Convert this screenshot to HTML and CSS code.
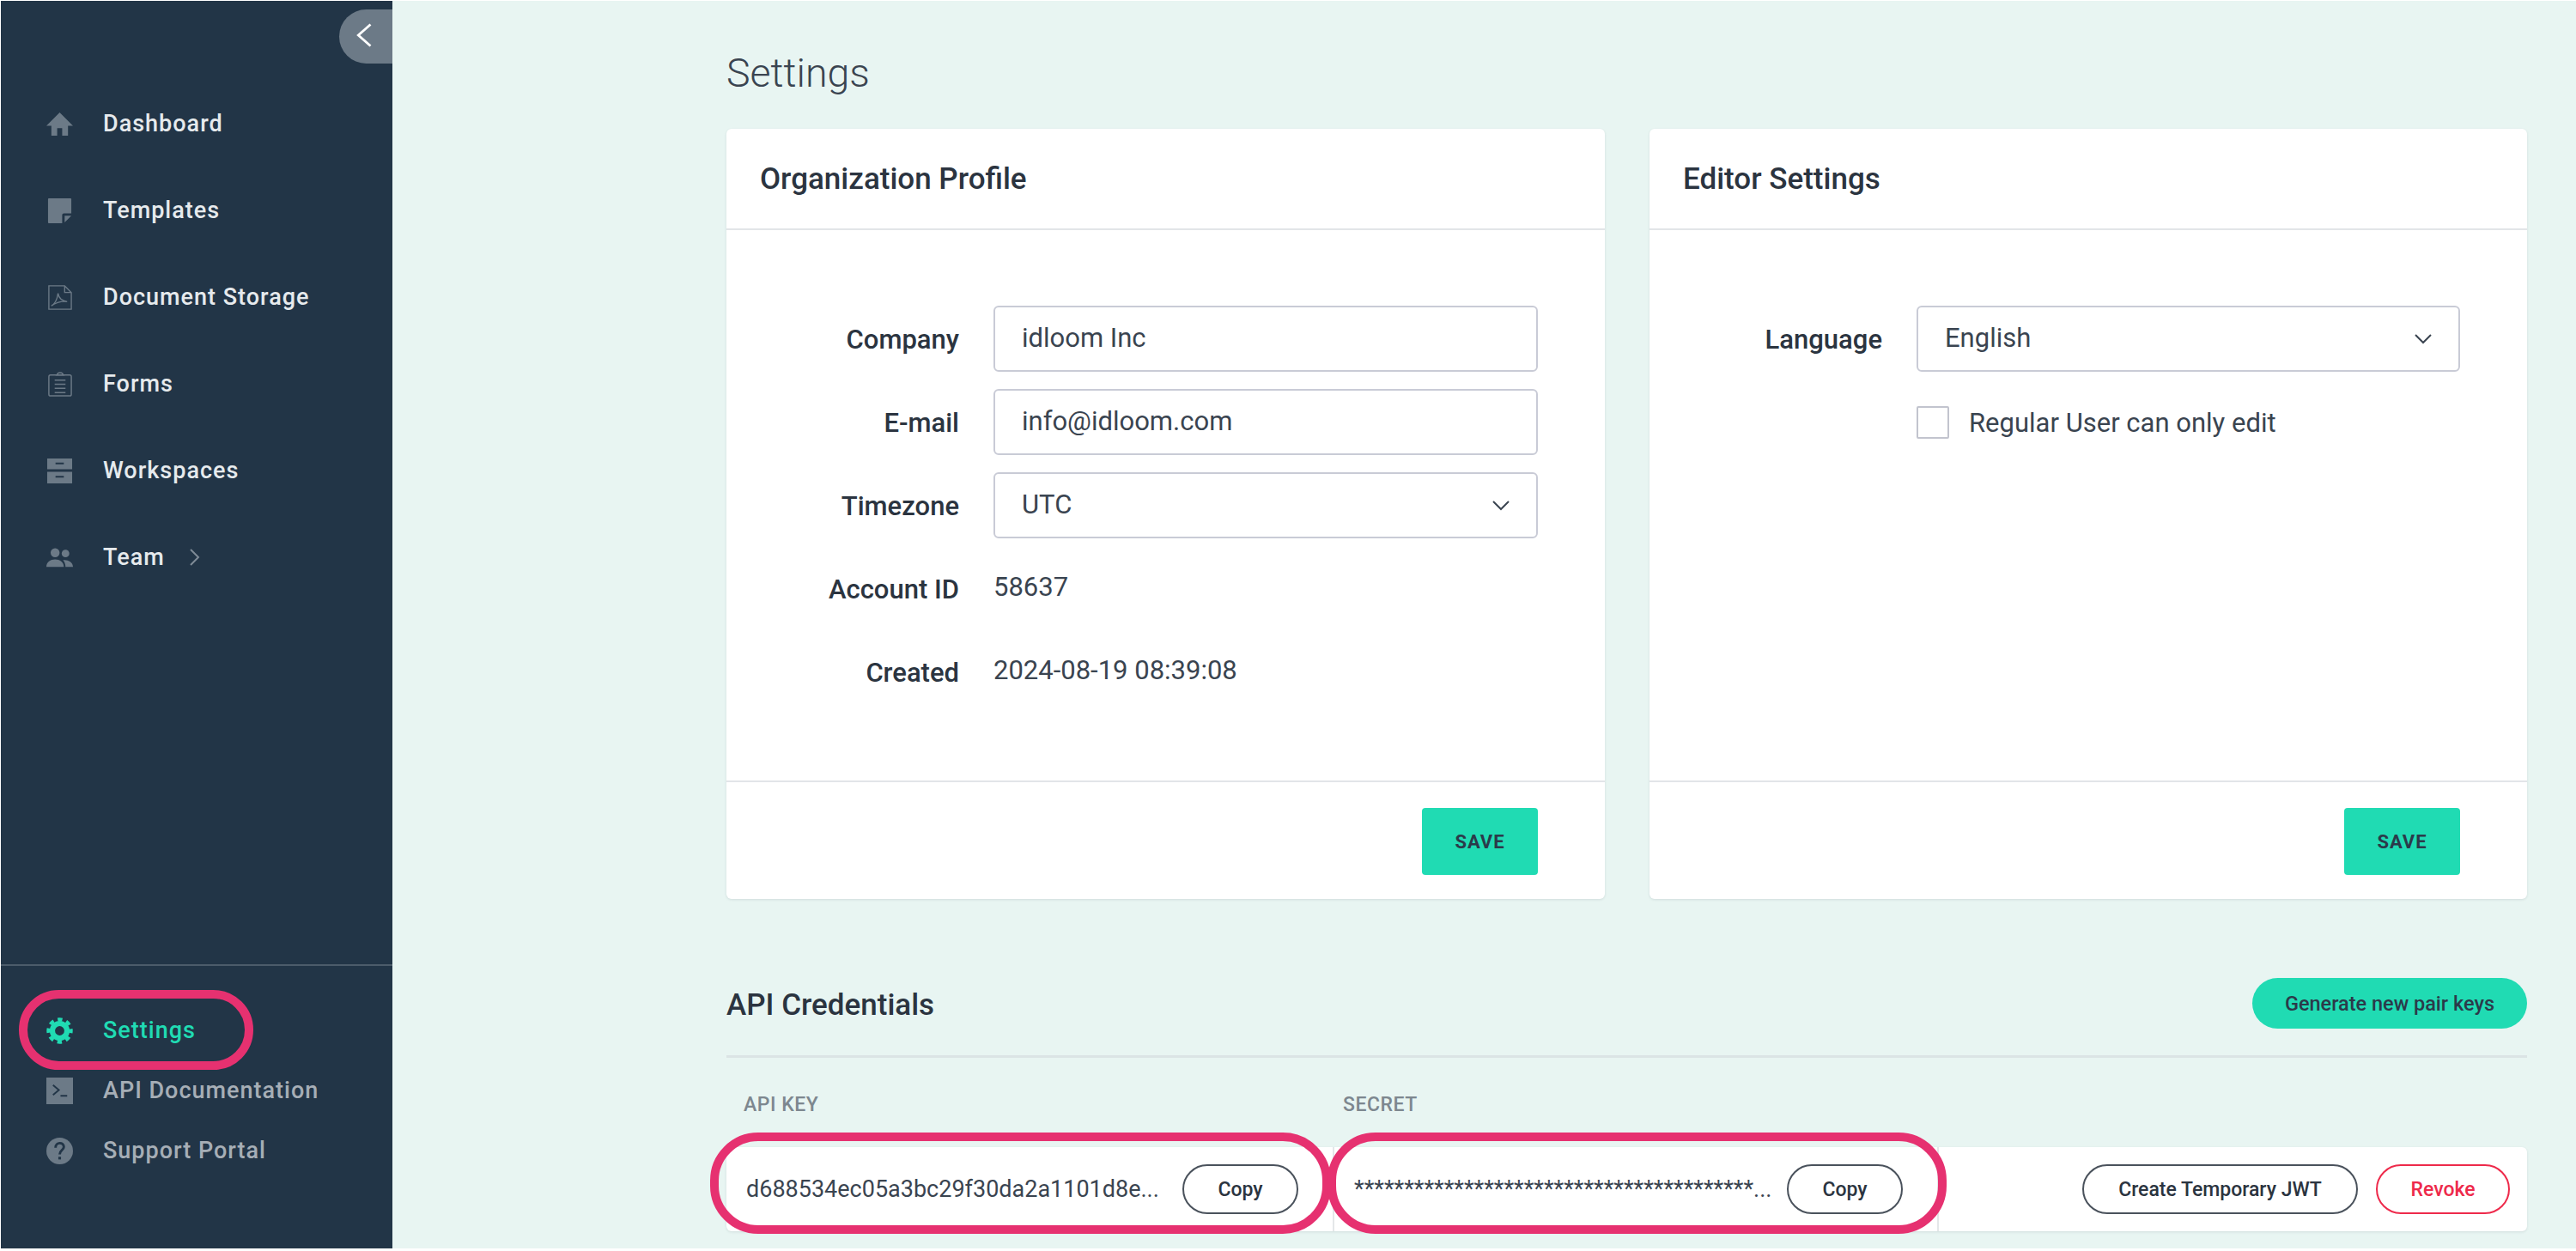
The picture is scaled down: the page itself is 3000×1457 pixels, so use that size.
FILE: index.html
```html
<!DOCTYPE html>
<html lang="en">
<head>
<meta charset="utf-8">
<title>Settings</title>
<link rel="stylesheet" href="styles.css">
</head>
<body>
<div class="app">
  <aside class="sidebar">
    <button class="collapse" aria-label="Collapse"><svg viewBox="0 0 24 36" width="20" height="30"><path d="M21 3 4 18l17 15" fill="none" stroke="#fff" stroke-width="3.4"/></svg></button>
    <nav class="nav">
      <a class="nav-item"><svg class="icon" viewBox="0 0 32 32"><path d="M13 30v-9h6v9h7V18h6L16 2 0 18h6v12z" fill="#6c7a87"/></svg><span>Dashboard</span></a>
      <a class="nav-item"><svg class="icon" viewBox="0 0 32 32"><path d="M3 1h26a1 1 0 0 1 1 1v17h-9a2 2 0 0 0-2 2v10H3a1 1 0 0 1-1-1V2a1 1 0 0 1 1-1zm19 21h8l-8 8z" fill="#6c7a87"/></svg><span>Templates</span></a>
      <a class="nav-item"><svg class="icon" viewBox="0 0 32 32" fill="none" stroke="#6c7a87" stroke-width="1.4"><path d="M3 2h19l8 8v20H3zM22 2v8h8"/><path d="M6 26c4-2 7-8 8-15 1 6 4 9 11 10-6-.6-12 0-19 5z"/></svg><span>Document Storage</span></a>
      <a class="nav-item"><svg class="icon" viewBox="0 0 32 32" fill="none" stroke="#6c7a87" stroke-width="1.5"><rect x="3" y="5" width="27" height="25" rx="2"/><path d="M11 5h11M13 5c0-4 7-4 7 0M10 11h13M10 16h13M10 21h13M10 26h13" /></svg><span>Forms</span></a>
      <a class="nav-item"><svg class="icon" viewBox="0 0 32 32"><path d="M1 1h30v13H1zm10 5v2h10V6zM1 17h30v14H1zm10 5v2h10v-2z" fill="#6c7a87" fill-rule="evenodd"/></svg><span>Workspaces</span></a>
      <a class="nav-item"><svg class="icon" viewBox="0 0 32 32"><circle cx="10.5" cy="10" r="5.4" fill="#6c7a87"/><circle cx="23" cy="11" r="4.6" fill="#6c7a87"/><path d="M0 27c0-6 5-9 10.500-9S21 21 21 27zM23 27c0-3-1-6-3-8 5-1 12 2 12 8z" fill="#6c7a87"/></svg><span>Team</span><svg class="team-arrow" viewBox="0 0 14 22" width="14" height="22"><path d="m2 2 9 9-9 9" fill="none" stroke="#7f8b97" stroke-width="2"/></svg></a>
    </nav>
    <nav class="nav-bottom">
      <a class="nav-sub active"><svg class="icon" viewBox="0 0 32 32"><circle cx="16" cy="16" r="8.8" fill="none" stroke="#20dbb3" stroke-width="6.4"/><circle cx="16" cy="16" r="13.5" fill="none" stroke="#20dbb3" stroke-width="4.4" stroke-dasharray="5.6 5" stroke-dashoffset="2.8"/></svg><span>Settings</span></a>
      <a class="nav-sub"><svg class="icon" viewBox="0 0 32 32"><rect width="32" height="32" fill="#6c7a87"/><path d="m8 9 7 6-7 6M17 22h8" fill="none" stroke="#223547" stroke-width="2"/></svg><span>API Documentation</span></a>
      <a class="nav-sub"><svg class="icon" viewBox="0 0 32 32"><circle cx="16" cy="16" r="16" fill="#6c7a87"/><path d="M11 12c0-7 10-7 10-1 0 4-5 4-5 9" fill="none" stroke="#223547" stroke-width="3"/><rect x="14.4" y="23" width="3.2" height="3.2" fill="#223547"/></svg><span>Support Portal</span></a>
    </nav>
  </aside>

  <main class="main">
    <h1 class="page-title">Settings</h1>
    <div class="cards">
      <section class="card">
        <h2 class="card-head">Organization Profile</h2>
        <div class="card-body">
          <div class="field"><label>Company</label><div class="input">idloom Inc</div></div>
          <div class="field"><label>E-mail</label><div class="input">info@idloom.com</div></div>
          <div class="field"><label>Timezone</label><div class="input">UTC<svg class="caret" viewBox="0 0 20 12" width="20" height="12"><path d="m1 1 9 9 9-9" fill="none" stroke="#3a4450" stroke-width="2"/></svg></div></div>
          <div class="field"><label>Account ID</label><div class="value">58637</div></div>
          <div class="field"><label>Created</label><div class="value">2024-08-19 08:39:08</div></div>
        </div>
        <div class="card-foot"><button class="save">SAVE</button></div>
      </section>
      <section class="card">
        <h2 class="card-head">Editor Settings</h2>
        <div class="card-body">
          <div class="field"><label>Language</label><div class="input">English<svg class="caret" viewBox="0 0 20 12" width="20" height="12"><path d="m1 1 9 9 9-9" fill="none" stroke="#3a4450" stroke-width="2"/></svg></div></div>
          <div class="check-row"><span class="checkbox"></span><span>Regular User can only edit</span></div>
        </div>
        <div class="card-foot"><button class="save">SAVE</button></div>
      </section>
    </div>

    <section class="api">
      <header class="api-head">
        <h2>API Credentials</h2>
        <button class="generate">Generate new pair keys</button>
      </header>
      <div class="api-labels"><span>API KEY</span><span>SECRET</span></div>
      <div class="api-row">
        <div class="cell key"><span class="mono">d688534ec05a3bc29f30da2a1101d8e...</span><button class="pill">Copy</button></div>
        <div class="cell secret"><span class="mono">****************************************...</span><button class="pill">Copy</button></div>
        <div class="cell actions"><button class="pill jwt">Create Temporary JWT</button><button class="pill revoke">Revoke</button></div>
      </div>
    </section>
  </main>

  <div class="oval oval-settings"></div>
  <div class="oval oval-key"></div>
  <div class="oval oval-secret"></div>
</div>
</body>
</html>
```
FILE: styles.css
```css
* { box-sizing: border-box; }
html, body { height: 100%; }
body {
  margin: 0;
  padding: 1px 0 0 1px;
  background: #fff;
  font-family: Roboto, "Liberation Sans", sans-serif;
  color: #2b3440;
  overflow: hidden;
}
button { font-family: inherit; cursor: pointer; }
h1, h2 { margin: 0; }

.app {
  position: relative;
  display: flex;
  height: 1453px;
  overflow: hidden;
  background: #e8f5f2;
}

/* Sidebar */
.sidebar {
  position: relative;
  flex: 0 0 456px;
  display: flex;
  flex-direction: column;
  background: #223547;
  padding-top: 103px;
}
.collapse {
  position: absolute;
  top: 10px;
  right: 0;
  width: 62px;
  height: 63px;
  border: 0;
  padding: 0 4px 4px 0;
  background: #6c7a87;
  border-radius: 32px 0 0 32px;
  display: flex;
  align-items: center;
  justify-content: center;
}
.nav { flex: 1; display: flex; flex-direction: column; gap: 21px; }
.nav-item, .nav-sub {
  display: flex;
  align-items: center;
  padding-left: 53px;
  font-weight: 500;
  font-size: 27px;
  letter-spacing: 1px;
  color: #e6eaed;
}
.nav-item { height: 80px; }
.nav-item .icon, .nav-sub .icon { width: 31px; height: 31px; margin-right: 35px; flex: none; }
.team-arrow { margin-left: 28px; }
.nav-bottom {
  border-top: 2px solid #4c5c6b;
  padding-top: 40px;
  height: 331px;
  flex: none;
  display: flex;
  flex-direction: column;
}
.nav-sub { height: 70px; color: #a6aeb6; }
.nav-sub.active { color: #20dbb3; }

/* Main */
.main { flex: 1; padding: 0 57px 0 389px; min-width: 0; }
.page-title {
  font-weight: 300;
  font-size: 46.5px;
  line-height: 56px;
  padding-top: 56px;
  height: 149px;
  color: #3a4450;
}
.cards {
  display: grid;
  grid-template-columns: 1023px 1022px;
  gap: 52px;
}
.card {
  display: flex;
  flex-direction: column;
  background: #fff;
  border-radius: 6px;
  box-shadow: 0 1px 3px rgba(40, 60, 70, .12);
}
.card-head {
  height: 118px;
  padding: 0 39px;
  display: flex;
  align-items: center;
  font-weight: 500;
  font-size: 35px;
  border-bottom: 2px solid #e2e5e8;
}
.card-body {
  flex: 1;
  padding: 88px 78px 88px 0;
  display: flex;
  flex-direction: column;
  gap: 20px;
}
.field { display: flex; align-items: center; height: 77px; font-size: 31px; }
.field label { flex: 0 0 271px; padding-top: 2px; text-align: right; font-weight: 500; }
.input {
  margin-left: 40px;
  flex: 1;
  height: 77px;
  padding: 0 31px 2px;
  display: flex;
  align-items: center;
  justify-content: space-between;
  background: #fff;
  border: 2px solid #c9cbd6;
  border-radius: 6px;
  color: #3a4450;
}
.input .caret { margin: 2px 0 0 0; }
.value { margin-left: 40px; color: #3a4450; padding-bottom: 4px; }
.check-row {
  margin: 20px 0 0 311px;
  display: flex;
  align-items: center;
  gap: 23px;
  font-size: 31px;
  color: #3a4450;
}
.checkbox {
  width: 38px;
  height: 38px;
  background: #fff;
  border: 2px solid #c2c4ce;
  border-radius: 2px;
}
.card-foot {
  height: 138px;
  padding: 30px 78px 30px 0;
  display: flex;
  justify-content: flex-end;
  border-top: 2px solid #e2e5e8;
}
.save {
  width: 135px;
  height: 78px;
  border: 0;
  border-radius: 4px;
  background: #20dbb3;
  color: #2b3a4a;
  font-weight: 700;
  font-size: 22px;
  letter-spacing: 1px;
}

/* API */
.api { margin-top: 92px; }
.api-head {
  height: 93px;
  padding-bottom: 31px;
  display: flex;
  align-items: center;
  justify-content: space-between;
  border-bottom: 3px solid #dbe4e5;
}
.api-head h2 { padding-top: 3px; font-weight: 500; font-size: 35px; }
.generate {
  width: 320px;
  height: 59px;
  border: 0;
  border-radius: 30px;
  background: #20dbb3;
  color: #2b3a4a;
  font-weight: 500;
  font-size: 23.5px;
}
.api-labels {
  height: 104px;
  display: flex;
  padding: 41px 0 0 20px;
  font-weight: 500;
  font-size: 23px;
  letter-spacing: .5px;
  color: #7d878f;
}
.api-labels span:first-child { width: 698px; }
.api-row {
  height: 98px;
  display: grid;
  grid-template-columns: 706px 704px 1fr;
  background: #fff;
  border-radius: 6px;
  box-shadow: 0 1px 3px rgba(40, 60, 70, .12);
}
.cell { display: flex; align-items: center; padding: 0 40px 0 23px; gap: 26px; }
.cell + .cell { border-left: 2px solid #e4e7e9; }
.secret { gap: 22px; }
.mono {
  flex: 1;
  min-width: 0;
  white-space: nowrap;
  font-size: 27px;
  color: #3a4450;
}
.pill {
  flex: none;
  width: 135px;
  height: 58px;
  background: #fff;
  border: 2px solid #4a525c;
  border-radius: 29px;
  color: #2b3440;
  font-weight: 500;
  font-size: 23px;
}
.actions { justify-content: flex-end; padding: 0 20px 0 0; gap: 21px; }
.jwt { width: 321px; }
.revoke { width: 156px; border-color: #ee2a4b; color: #ee2a4b; }

/* Annotation ovals */
.oval {
  position: absolute;
  border: 10px solid #e63170;
  pointer-events: none;
}
.oval-settings { left: 21px; top: 1152px; width: 273px; height: 93px; border-radius: 47px; }
.oval-key { left: 826px; top: 1318px; width: 723px; height: 118px; border-radius: 56px; }
.oval-secret { left: 1545px; top: 1318px; width: 721px; height: 118px; border-radius: 56px; }
```
